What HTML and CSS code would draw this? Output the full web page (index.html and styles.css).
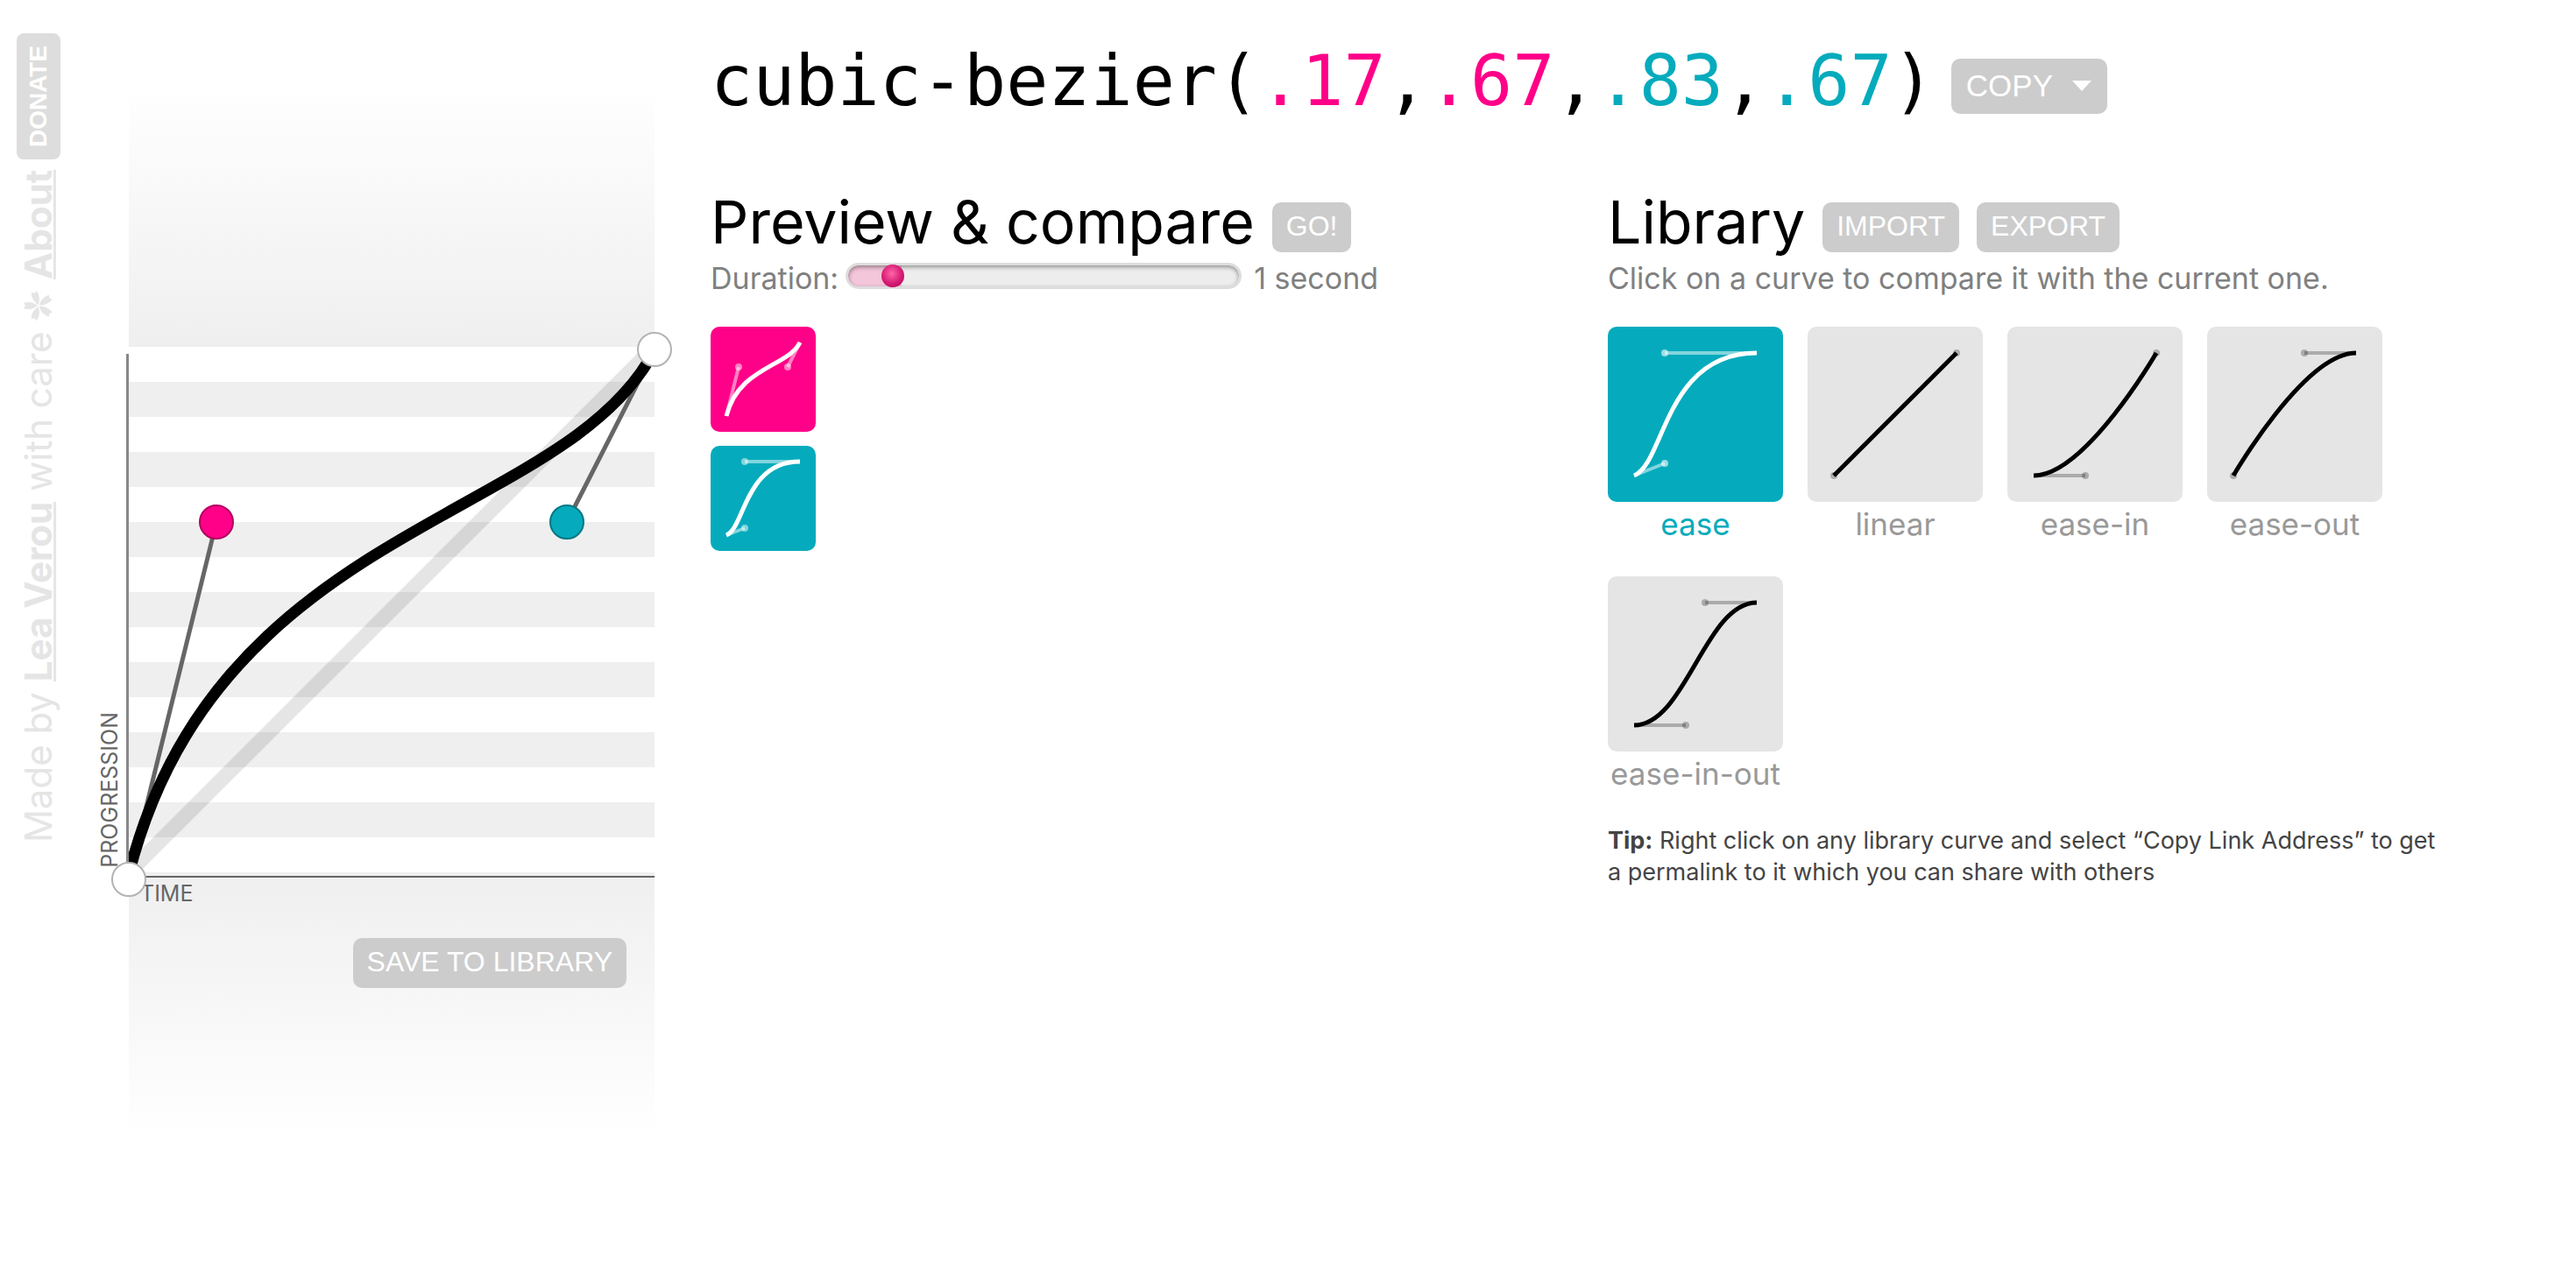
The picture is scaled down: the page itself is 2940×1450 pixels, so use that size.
FILE: index.html
```html
<!DOCTYPE html>
<html lang="en">
<head>
<meta charset="utf-8">
<title>cubic-bezier(.17,.67,.83,.67)</title>
<meta name="viewport" content="width=device-width, initial-scale=1">
<link rel="stylesheet" href="styles.css">
</head>
<body>
<footer class="credits">
  <p class="credits-text">Made by <a href="#lea">Lea Verou</a> with care
    <svg class="flower" viewBox="0 0 36 36" aria-hidden="true">
      <path id="petal" d="M18 17C14 12 13 6 15 1L18 3L21 1C23 6 22 12 18 17Z"/>
      <use href="#petal" transform="rotate(72 18 18)"/>
      <use href="#petal" transform="rotate(144 18 18)"/>
      <use href="#petal" transform="rotate(216 18 18)"/>
      <use href="#petal" transform="rotate(288 18 18)"/>
    </svg>
    <a href="#about">About</a> <a class="donate" href="#donate">DONATE</a></p>
</footer>

<section class="editor" aria-label="Curve editor">
  <div class="plane">
    <svg class="curve" viewBox="0 0 600 1200" aria-hidden="true">
      <path class="ideal" d="M0 888L588 300H600V312L12 900H0Z"/>
      <path class="arm" d="M0 906L100 500M600 304L500 500"/>
      <path class="bezier" d="M0 902C102 500 498 500 600 304"/>
    </svg>
    <span class="axis-y"><span>PROGRESSION</span></span>
    <span class="axis-x">TIME</span>
    <button class="handle start" type="button" aria-label="Start point"></button>
    <button class="handle p1" type="button" aria-label="First control point"></button>
    <button class="handle p2" type="button" aria-label="Second control point"></button>
    <button class="handle end" type="button" aria-label="End point"></button>
    <button class="btn save" type="button">SAVE TO LIBRARY</button>
  </div>
</section>

<main class="main">
  <header class="formula">
    <h1>cubic-bezier(<span class="pink">.17</span>,<span class="pink">.67</span>,<span class="teal">.83</span>,<span class="teal">.67</span>)</h1>
    <button class="btn copy" type="button">COPY
      <svg class="caret" viewBox="0 0 22 12" aria-hidden="true"><path d="M0 0H22L11 12Z"/></svg>
    </button>
  </header>

  <div class="columns">
    <section class="preview">
      <div class="heading">
        <h2>Preview &amp; compare</h2>
        <button class="btn" type="button">GO!</button>
      </div>
      <div class="duration">
        <label for="duration">Duration:</label>
        <input class="slider" id="duration" type="range" min="0.1" max="10" step="0.1" value="1">
        <output for="duration">1 second</output>
      </div>
      <div class="boxes">
        <svg class="box current" viewBox="0 0 120 120" role="img" aria-label="Current curve">
          <path class="thumb-arm" d="M18 102L32 46M102 18L88 46"/>
          <circle cx="32" cy="46" r="4"/><circle cx="88" cy="46" r="4"/>
          <path class="thumb-curve" d="M18 102C32 46 88 46 102 18"/>
        </svg>
        <svg class="box compare" viewBox="0 0 120 120" role="img" aria-label="ease">
          <path class="thumb-arm" d="M18 102L39 94M102 18H39"/>
          <circle cx="39" cy="94" r="4"/><circle cx="39" cy="18" r="4"/>
          <path class="thumb-curve" d="M18 102C39 94 39 18 102 18"/>
        </svg>
      </div>
    </section>

    <section class="library">
      <div class="heading">
        <h2>Library</h2>
        <button class="btn" type="button">IMPORT</button>
        <button class="btn" type="button">EXPORT</button>
      </div>
      <p class="hint">Click on a curve to compare it with the current one.</p>
      <div class="curves">
        <a class="item selected" href="#.25,.1,.25,1">
          <svg class="tile" viewBox="0 0 200 200" aria-hidden="true">
            <path class="thumb-arm" d="M30 170L65 156M170 30H65"/>
            <circle cx="65" cy="156" r="4"/><circle cx="65" cy="30" r="4"/>
            <path class="thumb-curve" d="M30 170C65 156 65 30 170 30"/>
          </svg>
          <span>ease</span>
        </a>
        <a class="item" href="#0,0,1,1">
          <svg class="tile" viewBox="0 0 200 200" aria-hidden="true">
            <circle cx="30" cy="170" r="4"/><circle cx="170" cy="30" r="4"/>
            <path class="thumb-curve" d="M30 170L170 30"/>
          </svg>
          <span>linear</span>
        </a>
        <a class="item" href="#.42,0,1,1">
          <svg class="tile" viewBox="0 0 200 200" aria-hidden="true">
            <path class="thumb-arm" d="M30 170H89"/>
            <circle cx="89" cy="170" r="4"/><circle cx="170" cy="30" r="4"/>
            <path class="thumb-curve" d="M30 170C89 170 170 30 170 30"/>
          </svg>
          <span>ease-in</span>
        </a>
        <a class="item" href="#0,0,.58,1">
          <svg class="tile" viewBox="0 0 200 200" aria-hidden="true">
            <path class="thumb-arm" d="M170 30H111"/>
            <circle cx="30" cy="170" r="4"/><circle cx="111" cy="30" r="4"/>
            <path class="thumb-curve" d="M30 170C30 170 111 30 170 30"/>
          </svg>
          <span>ease-out</span>
        </a>
        <a class="item" href="#.42,0,.58,1">
          <svg class="tile" viewBox="0 0 200 200" aria-hidden="true">
            <path class="thumb-arm" d="M30 170H89M170 30H111"/>
            <circle cx="89" cy="170" r="4"/><circle cx="111" cy="30" r="4"/>
            <path class="thumb-curve" d="M30 170C89 170 111 30 170 30"/>
          </svg>
          <span>ease-in-out</span>
        </a>
      </div>
      <p class="tip"><strong>Tip:</strong> Right click on any library curve and select “Copy Link Address” to get a permalink to it which you can share with others</p>
    </section>
  </div>
</main>
</body>
</html>
```

FILE: styles.css
```css
* { box-sizing: border-box; }

body {
  display: flex;
  align-items: flex-start;
  margin: 0;
  background: #fff;
  color: #000;
  font-family: Inter, "Liberation Sans", sans-serif;
}

h1, h2, p { margin: 0; font-weight: 400; }

.pink { color: #f08; }
.teal { color: #05abbc; }

.btn {
  height: 57px;
  padding: 0 16px 3px;
  border: 0;
  border-radius: 10px;
  background: #ccc;
  color: #fff;
  font: 32px/54px "Liberation Sans", Arial, sans-serif;
  white-space: nowrap;
}

/* Vertical credits */
.credits {
  flex: none;
  width: 147px;
  padding: 38px 0 0 19px;
}
.credits-text {
  writing-mode: vertical-rl;
  transform: rotate(180deg);
  width: 50px;
  color: #e5e5e5;
  font-size: 42px;
  line-height: 50px;
  white-space: nowrap;
}
.credits a {
  color: inherit;
  font-weight: 700;
  text-decoration-thickness: 3px;
  text-underline-offset: -4px;
  text-decoration-skip-ink: none;
}
.credits .donate {
  display: inline-block;
  width: 50px;
  height: 144px;
  border-radius: 8px;
  background: #ddd;
  color: #fff;
  font: 700 28px/50px "Liberation Sans", Arial, sans-serif;
  text-align: center;
  text-decoration: none;
}
.flower {
  width: 36px;
  height: 36px;
  fill: #e5e5e5;
  transform: rotate(90deg);
}

/* Curve editor */
.editor {
  flex: none;
  width: 600px;
  padding-top: 96px;
}
.plane {
  position: relative;
  height: 1200px;
  background:
    linear-gradient(#fff, #efefef) 0 0 / 100% 300px no-repeat,
    linear-gradient(#efefef, #fff) 0 100% / 100% 300px no-repeat,
    repeating-linear-gradient(#fff 0 40px, #efefef 40px 80px) 0 300px / 100% 600px no-repeat;
}
.curve {
  display: block;
  width: 100%;
  height: 100%;
  fill: none;
}
.ideal { fill: rgba(0, 0, 0, .1); }
.arm { stroke: #666; stroke-width: 5px; }
.bezier { stroke: #000; stroke-width: 13px; }

.axis-x, .axis-y {
  position: absolute;
  color: #666;
  font-size: 25px;
  line-height: 32px;
}
.axis-x {
  top: 904px;
  left: 0;
  width: 100%;
  padding: 2px 0 0 13px;
  border-top: 2px solid #666;
}
.axis-y {
  top: 308px;
  right: 100%;
  height: 596px;
  padding: 0 3px 9px 0;
  border-right: 3px solid #888;
  writing-mode: vertical-rl;
  text-align: end;
}
.axis-y span {
  display: inline-block;
  transform: rotate(180deg);
}

.handle {
  position: absolute;
  width: 40px;
  height: 40px;
  padding: 0;
  border: 2px solid #b3b3b3;
  border-radius: 50%;
  background: #fff;
  translate: -50% -50%;
}
.start { left: 0; top: 908px; }
.end { left: 600px; top: 303px; }
.p1 { left: 100px; top: 500px; border-color: #b2005f; background: #f08; }
.p2 { left: 500px; top: 500px; border-color: #037883; background: #05abbc; }

.save {
  position: absolute;
  right: 32px;
  top: 975px;
}

/* Main */
.main {
  flex: 1;
  min-width: 0;
  padding: 45px 151px 0 64px;
}
.formula {
  display: flex;
  align-items: center;
  gap: 19px;
}
.formula h1 {
  font: 80px/96px "DejaVu Sans Mono", monospace;
}
.copy {
  display: flex;
  align-items: center;
  gap: 22px;
  height: 63px;
  padding: 0 18px 0 17px;
  margin-top: 10px;
  font-size: 35px;
}
.caret { width: 22px; height: 12px; fill: #fff; }

.columns {
  display: grid;
  grid-template-columns: 1fr 1fr;
  gap: 70px;
  padding-top: 72px;
}
.heading {
  display: flex;
  align-items: flex-end;
  gap: 20px;
  height: 75px;
}
.heading h2 {
  font-size: 68px;
  line-height: 70px;
  white-space: nowrap;
}
.hint, .duration {
  height: 60px;
  color: #808080;
  font-size: 34px;
  line-height: 60px;
  white-space: nowrap;
}
.duration { display: flex; }

.slider {
  appearance: none;
  width: 452px;
  height: 30px;
  margin: 12px 14px 0 8px;
  border: 3px solid #ddd;
  border-radius: 15px;
  background: linear-gradient(90deg, #f3c6da 61px, #ededed 61px);
  box-shadow: inset 0 2px 5px rgba(0, 0, 0, .4);
}
.slider::-webkit-slider-thumb {
  appearance: none;
  width: 26px;
  height: 26px;
  border-radius: 50%;
  background: radial-gradient(circle at 45% 40%, #ff66a8, #d61a73 55%, #a8004f);
}

.boxes {
  display: flex;
  flex-direction: column;
  gap: 16px;
  padding-top: 25px;
}
.box { width: 120px; height: 120px; border-radius: 10px; }
.current { background: #f08; }
.compare { background: #05abbc; }

.box, .selected .tile { stroke: #fff; fill: #fff; }
.thumb-arm { fill: none; stroke-width: 4px; opacity: .5; }
.thumb-curve { fill: none; stroke-width: 5px; }
.box circle { stroke: none; opacity: .5; }

.curves {
  display: flex;
  flex-wrap: wrap;
  gap: 35px 28px;
  padding-top: 25px;
}
.item {
  width: 200px;
  color: #999;
  font-size: 35px;
  line-height: 50px;
  text-align: center;
  text-decoration: none;
  white-space: nowrap;
}
.item span { display: block; }
.selected { color: #05abbc; }
.tile {
  display: block;
  width: 200px;
  height: 200px;
  border-radius: 10px;
  background: #e5e5e5;
  stroke: #000;
  fill: #000;
}
.tile .thumb-arm { opacity: .25; }
.tile circle { stroke: none; opacity: .25; }
.selected .tile { background: #05abbc; stroke: #fff; fill: #fff; }
.selected .tile .thumb-arm { opacity: .5; }
.selected .tile circle { opacity: .6; }
.tile .thumb-arm, .tile .thumb-curve { fill: none; }

.tip {
  padding-top: 34px;
  color: #444;
  font-size: 27px;
  line-height: 36px;
}
```
